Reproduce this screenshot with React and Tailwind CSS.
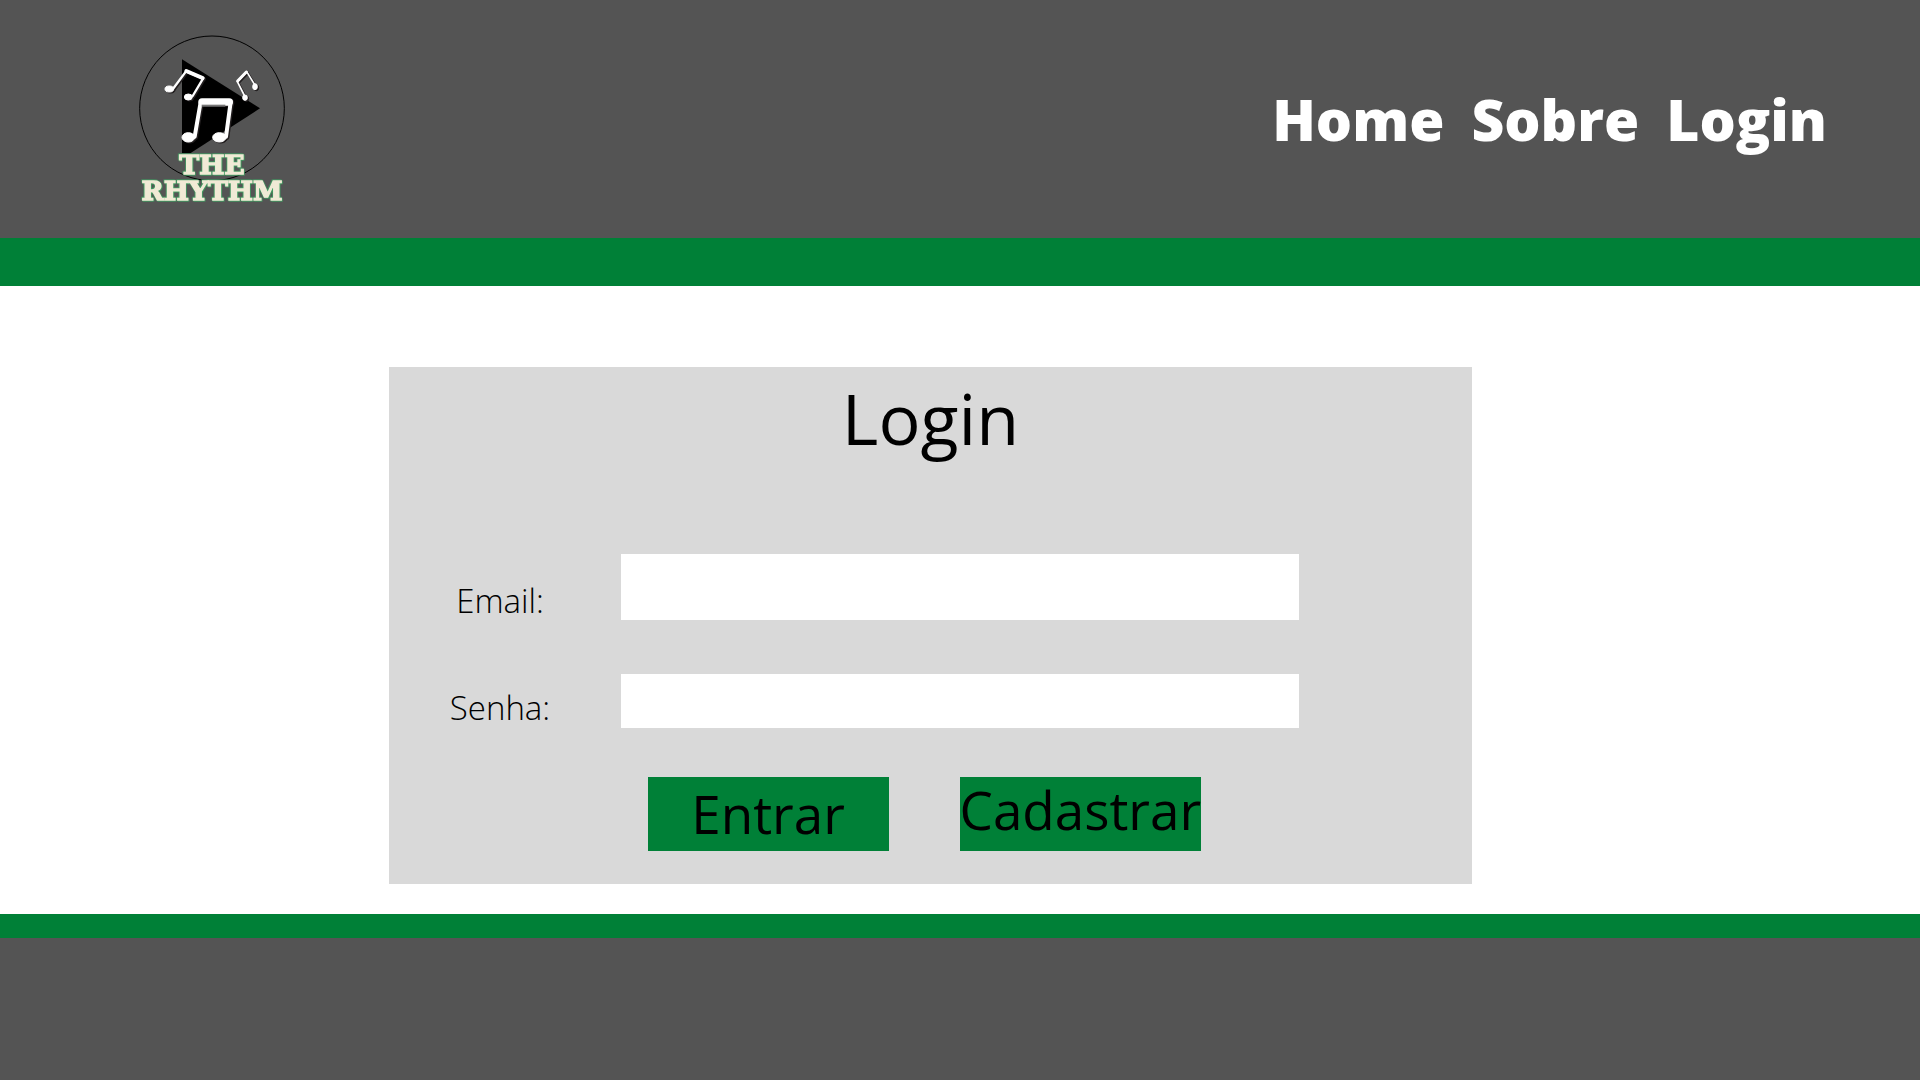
const navLinks = ["Home", "Sobre", "Login"];

function Notes() {
  return (
    <>
      <g strokeLinecap="round" strokeLinejoin="round">
        <path d="M161 204 198 154 249 176 218 228" fill="none" strokeWidth="7" />
        <path d="M199 153 248 174" strokeWidth="12" />
        <path d="M374 228 352 185 380 155 404 194" fill="none" strokeWidth="5" />
        <path d="M353 183 379 156" strokeWidth="9" />
        <path d="M224 350 242 246M318 350 332 246" strokeWidth="12" />
        <path d="M246 246H328" strokeWidth="22" />
      </g>
      <g strokeWidth="3">
        <ellipse cx="148" cy="207" rx="13" ry="9" />
        <ellipse cx="205" cy="231" rx="12" ry="9" />
        <ellipse cx="375" cy="233" rx="7" ry="8" />
        <ellipse cx="405" cy="200" rx="7" ry="9" />
        <ellipse cx="205" cy="352" rx="19" ry="14" />
        <ellipse cx="298" cy="352" rx="20" ry="14" />
      </g>
    </>
  );
}

function Logo() {
  return (
    <svg viewBox="0 0 540 570" className="h-[190px] w-[180px]" role="img" aria-label="The Rhythm">
      <circle cx="276" cy="265" r="217" fill="none" stroke="#000" strokeWidth="3" />
      <path d="M186 118 420 265 212 399H186Z" fill="#000" />
      <g transform="translate(4 3)" stroke="#231f20" fill="#231f20">
        <Notes />
      </g>
      <g stroke="#fff" fill="#fff">
        <Notes />
      </g>
      <path d="M245 257H316" stroke="#777" strokeWidth="6" />
      <g
        textAnchor="middle"
        fill="#f1ead6"
        stroke="#f1ead6"
        strokeWidth="4"
        className="font-['DejaVu_Serif',serif] text-[80px] font-bold [filter:drop-shadow(2px_2px_0_#3fa463)_drop-shadow(-2px_-2px_0_#3fa463)]"
      >
        <text x="276" y="461">THE</text>
        <text x="276" y="541">RHYTHM</text>
      </g>
    </svg>
  );
}

function Field({ id, label, type, size }) {
  return (
    <div className="grid grid-cols-[232fr_678fr_173fr]">
      <label htmlFor={id} className="pt-6 pr-[10px] text-center text-[33px] leading-[46px] font-light">
        {label}
      </label>
      <input id={id} type={type} className={`w-full bg-white px-4 text-3xl outline-none ${size}`} />
    </div>
  );
}

export default function App() {
  return (
    <div className="flex min-h-screen flex-col bg-white font-['Open_Sans',sans-serif] text-black">
      <header className="flex h-[238px] items-center justify-between bg-[#545454] pr-[93px] pl-[120px]">
        <a href="#home" className="-mt-2">
          <Logo />
        </a>
        <nav className="flex gap-[27px] text-[57px] leading-[80px] font-extrabold text-white">
          {navLinks.map((name) => (
            <a key={name} href={`#${name.toLowerCase()}`}>
              {name}
            </a>
          ))}
        </nav>
      </header>
      <div className="h-12 bg-[#008037]" />
      <main className="grid flex-1 grid-cols-[389fr_1083fr_448fr] pt-[81px] pb-[30px]">
        <form className="col-start-2 bg-[#d9d9d9]" onSubmit={(e) => e.preventDefault()}>
          <h1 className="pt-[3px] text-center text-[70px] leading-[96px]">Login</h1>
          <div className="mt-[88px] flex flex-col gap-[37px]">
            <Field id="email" label="Email:" type="email" size="h-[66px]" />
            <Field id="senha" label="Senha:" type="password" size="mt-[13px] h-[54px]" />
          </div>
          <div className="mt-[46px] flex justify-center gap-[71px] pr-[13px] text-[53px] leading-[74px]">
            <button type="submit" className="h-[74px] w-[241px] bg-[#008037]">
              Entrar
            </button>
            <button type="button" className="h-[74px] w-[241px] bg-[#008037] pb-2 leading-[66px]">
              Cadastrar
            </button>
          </div>
        </form>
      </main>
      <div className="h-6 bg-[#008037]" />
      <footer className="h-[142px] bg-[#545454]" />
    </div>
  );
}
